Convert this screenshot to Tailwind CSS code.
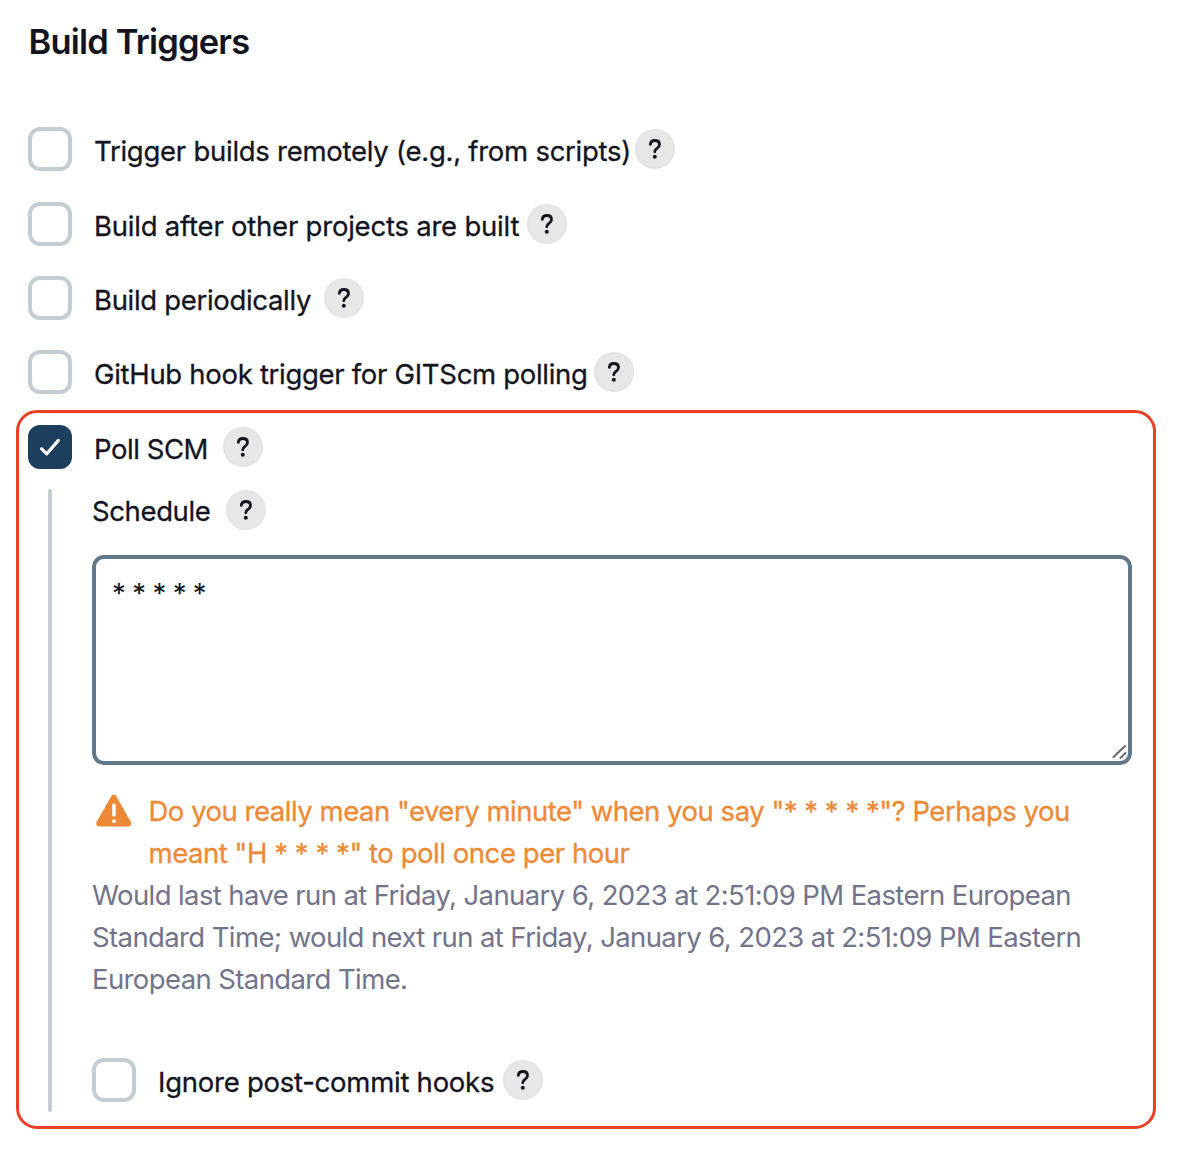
<!DOCTYPE html>
<html lang="en">
<head>
<meta charset="utf-8">
<title>Build Triggers</title>
<script src="https://cdn.jsdelivr.net/npm/@tailwindcss/browser@4"></script>
</head>
<body class="bg-white text-[#14141f] font-['Inter',sans-serif] text-[27.5px] leading-[42px] whitespace-nowrap">
<svg class="hidden">
  <symbol id="help" viewBox="0 0 40 40">
    <circle cx="20" cy="20" r="20" fill="#e3e3e3"/>
    <circle cx="20" cy="20" r="18.5" fill="#e7e7e7"/>
    <path d="M15.300 15.400C15.500 12.800 17.400 11.500 19.900 11.500c2.800 0 4.600 1.500 4.600 3.900 0 1.900-1 2.900-2.500 3.900-1.500 1-2.200 1.700-2.200 3.300v.2" fill="none" stroke="#14141f" stroke-width="2.800" stroke-linecap="round" stroke-linejoin="round"/>
    <circle cx="19.800" cy="27.800" r="2" fill="#14141f"/>
  </symbol>
</svg>
<main class="w-[1188px] h-[1156px] pt-5 overflow-hidden">
  <h1 class="ml-[28.500px] h-[44px] leading-[44px] text-[34.5px] font-semibold tracking-[-0.81px]">Build Triggers</h1>

  <div class="mt-[63px] ml-7 flex flex-col gap-[30.500px]">
    <div class="flex items-center h-11">
      <span class="size-11 rounded-xl border-4 border-[#c4cdd1]"></span>
      <span class="ml-[22px] w-[541px] pt-1 [-webkit-text-stroke:0.3px] tracking-[-0.26px]">Trigger builds remotely (e.g., from scripts)</span>
      <svg class="size-10"><use href="#help"/></svg>
    </div>
    <div class="flex items-center h-11">
      <span class="size-11 rounded-xl border-4 border-[#c4cdd1]"></span>
      <span class="ml-[22px] w-[433px] pt-1 [-webkit-text-stroke:0.3px] tracking-[-0.22px]">Build after other projects are built</span>
      <svg class="size-10"><use href="#help"/></svg>
    </div>
    <div class="-mt-[0.500px] flex items-center h-11">
      <span class="size-11 rounded-xl border-4 border-[#c4cdd1]"></span>
      <span class="ml-[22px] w-[230px] pt-1 [-webkit-text-stroke:0.3px] tracking-[-0.32px]">Build periodically</span>
      <svg class="size-10"><use href="#help"/></svg>
    </div>
    <div class="-mt-[0.500px] flex items-center h-11">
      <span class="size-11 rounded-xl border-4 border-[#c4cdd1]"></span>
      <span class="ml-[22px] w-[500px] pt-1 [-webkit-text-stroke:0.3px] tracking-[-0.3px]">GitHub hook trigger for GITScm polling</span>
      <svg class="size-10"><use href="#help"/></svg>
    </div>
  </div>

  <section class="mt-[16.500px] ml-4 w-[1140px] h-[719px] rounded-[21px] border-3 border-[#ea4025] pt-3 pl-[9px] pr-[21px]">
    <div class="flex items-center h-11">
      <span class="size-11 rounded-xl bg-[#1c3f5e] flex items-center justify-center">
        <svg class="size-11" viewBox="0 0 44 44" fill="none" stroke="#fff" stroke-width="3.200" stroke-linecap="round" stroke-linejoin="round"><path d="M13.600 23.800l5.200 5L30.400 15.400"/></svg>
      </span>
      <span class="ml-[22px] w-[129px] pt-1 [-webkit-text-stroke:0.3px] tracking-[-0.45px]">Poll SCM</span>
      <svg class="size-10"><use href="#help"/></svg>
    </div>

    <div class="mt-5 ml-5 flex h-[623px]">
      <div class="w-1 rounded-full bg-[#c4cdd1]"></div>
      <div class="ml-10 flex-1 pt-px">
        <div class="flex items-center h-10">
          <span class="w-[134px] pt-[2px] [-webkit-text-stroke:0.3px] tracking-[-0.38px]">Schedule</span>
          <svg class="size-10"><use href="#help"/></svg>
        </div>

        <div class="relative mt-[25px] w-[1040px] h-[210px] rounded-xl border-4 border-[#607889] pl-4 pt-[13px] tracking-[-0.65px] leading-[42px]">* * * * *
          <svg class="absolute right-0 bottom-0 size-5" viewBox="0 0 20 20" stroke="#666" stroke-width="2" stroke-linecap="round"><path d="M5.500 16L17 5M12.500 17l5-5"/></svg>
        </div>

        <div class="mt-[25px] flex text-[#ee8a36] [-webkit-text-stroke:0.3px]">
          <svg class="mt-[4px] ml-[3.500px] w-[35.500px] h-[34px]" viewBox="0 0 36 34"><path d="M15.400 2a3.100 3.100 0 0 1 5.300 0L35.500 28.500c1 2-.3 4.200-2.600 4.200H3.100C.8 32.700-.5 30.500 .5 28.500z" fill="#ee8a36"/><path d="M18.200 11.300v9.800" stroke="#fff" stroke-width="3.600" stroke-linecap="round"/><circle cx="18.200" cy="27.300" r="1.900" fill="#fff"/></svg>
          <p class="ml-[17.500px]"><span class="block tracking-[-0.48px]">Do you really mean "every minute" when you say "* * * * *"? Perhaps you</span><span class="block tracking-[-0.45px]">meant "H * * * *" to poll once per hour</span></p>
        </div>
        <p class="text-[#73738c] tracking-[-0.61px]">
          <span class="block">Would last have run at Friday, January 6, 2023 at 2:51:09 PM Eastern European</span>
          <span class="block">Standard Time; would next run at Friday, January 6, 2023 at 2:51:09 PM Eastern</span>
          <span class="block">European Standard Time.</span>
        </p>

        <div class="mt-[58px] flex items-center h-11">
          <span class="size-11 rounded-xl border-4 border-[#c4cdd1]"></span>
          <span class="ml-[22px] w-[345px] pt-1 [-webkit-text-stroke:0.3px] tracking-[-0.25px]">Ignore post-commit hooks</span>
          <svg class="size-10"><use href="#help"/></svg>
        </div>
      </div>
    </div>
  </section>
</main>
</body>
</html>
